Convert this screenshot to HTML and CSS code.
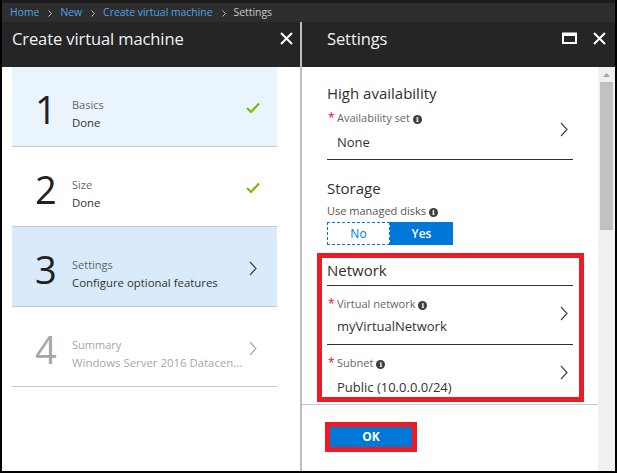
FILE: index.html
```html
<!DOCTYPE html>
<html>
<head>
<meta charset="utf-8">
<link rel="stylesheet" href="styles.css">
</head>
<body>
<div class="frame">
  <div class="topstrip"></div>
  <div class="crumbs">
    <a class="crumb">Home</a><svg class="sep" width="4" height="7" viewBox="0 0 4 7"><path d="M0.5 0.5L3.5 3.5L0.5 6.5" fill="none" stroke="#bdbdbd" stroke-width="1"/></svg>
    <a class="crumb">New</a><svg class="sep" width="4" height="7" viewBox="0 0 4 7"><path d="M0.5 0.5L3.5 3.5L0.5 6.5" fill="none" stroke="#bdbdbd" stroke-width="1"/></svg>
    <a class="crumb">Create virtual machine</a><svg class="sep" width="4" height="7" viewBox="0 0 4 7"><path d="M0.5 0.5L3.5 3.5L0.5 6.5" fill="none" stroke="#bdbdbd" stroke-width="1"/></svg>
    <span class="crumb-current">Settings</span>
  </div>
  <div class="panels">
    <section class="blade blade-left">
      <header class="blade-head">
        <h1 class="blade-title">Create virtual machine</h1>
        <div class="head-icons">
          <svg class="icon-x" width="13" height="13" viewBox="0 0 13 13"><path d="M1 1L12 12M12 1L1 12" stroke="#fff" stroke-width="2"/></svg>
        </div>
      </header>
      <div class="steps">
        <div class="step step-done">
          <div class="step-num">1</div>
          <div class="step-text"><div class="step-label">Basics</div><div class="step-sub">Done</div></div>
          <svg class="check" width="14" height="12" viewBox="0 0 14 12"><path d="M1 6L5 10L13 1.5" fill="none" stroke="#7fba00" stroke-width="2.2"/></svg>
        </div>
        <div class="step">
          <div class="step-num">2</div>
          <div class="step-text"><div class="step-label">Size</div><div class="step-sub">Done</div></div>
          <svg class="check" width="14" height="12" viewBox="0 0 14 12"><path d="M1 6L5 10L13 1.5" fill="none" stroke="#7fba00" stroke-width="2.2"/></svg>
        </div>
        <div class="step step-active">
          <div class="step-num">3</div>
          <div class="step-text"><div class="step-label">Settings</div><div class="step-sub">Configure optional features</div></div>
          <svg class="chev" width="8" height="15" viewBox="0 0 8 15"><path d="M1 1L7 7.5L1 14" fill="none" stroke="#444" stroke-width="1.2"/></svg>
        </div>
        <div class="step step-disabled">
          <div class="step-num">4</div>
          <div class="step-text"><div class="step-label">Summary</div><div class="step-sub">Windows Server 2016 Datacen...</div></div>
          <svg class="chev" width="8" height="15" viewBox="0 0 8 15"><path d="M1 1L7 7.5L1 14" fill="none" stroke="#aaa" stroke-width="1.2"/></svg>
        </div>
      </div>
    </section>
    <div class="divider"></div>
    <section class="blade blade-right">
      <header class="blade-head">
        <h1 class="blade-title title-right">Settings</h1>
        <div class="head-icons">
          <svg class="icon-max" width="15" height="12" viewBox="0 0 15 12"><rect x="1" y="1.5" width="13" height="9.5" fill="none" stroke="#fff" stroke-width="2"/><rect x="1" y="1" width="13" height="3" fill="#fff"/></svg>
          <svg class="icon-x" width="13" height="13" viewBox="0 0 13 13"><path d="M1 1L12 12M12 1L1 12" stroke="#fff" stroke-width="2"/></svg>
        </div>
      </header>
      <div class="blade-body">
        <div class="main">
          <div class="scroll">
            <h2 class="sec-title">High availability</h2>
            <div class="field">
              <div class="f-label"><span class="req">*</span>Availability set <span class="info">i</span></div>
              <div class="f-value">None</div>
              <svg class="chev f-chev" width="8" height="15" viewBox="0 0 8 15"><path d="M1 1L7 7.5L1 14" fill="none" stroke="#444" stroke-width="1.2"/></svg>
            </div>
            <h2 class="sec-title sec-storage">Storage</h2>
            <div class="plain-label">Use managed disks <span class="info">i</span></div>
            <div class="toggle">
              <span class="tg tg-no">No</span><span class="tg tg-yes">Yes</span>
            </div>
            <div class="highlight">
              <h2 class="sec-title net-title">Network</h2>
              <div class="field field-net">
                <div class="f-label"><span class="req">*</span>Virtual network <span class="info">i</span></div>
                <div class="f-value">myVirtualNetwork</div>
                <svg class="chev f-chev" width="8" height="15" viewBox="0 0 8 15"><path d="M1 1L7 7.5L1 14" fill="none" stroke="#444" stroke-width="1.2"/></svg>
              </div>
              <div class="field field-net field-last">
                <div class="f-label"><span class="req">*</span>Subnet <span class="info">i</span></div>
                <div class="f-value">Public (10.0.0.0/24)</div>
                <svg class="chev f-chev" width="8" height="15" viewBox="0 0 8 15"><path d="M1 1L7 7.5L1 14" fill="none" stroke="#444" stroke-width="1.2"/></svg>
              </div>
            </div>
          </div>
          <div class="footer">
            <div class="ok-mark"><button class="ok">OK</button></div>
          </div>
        </div>
        <div class="scrollbar">
          <svg class="sb-arrow" width="7" height="4" viewBox="0 0 7 4"><path d="M0 4L3.5 0L7 4Z" fill="#a6a6a6"/></svg>
          <div class="sb-thumb"></div>
        </div>
      </div>
    </section>
  </div>
</div>
</body>
</html>
```
FILE: styles.css
```css
* { box-sizing: border-box; }
html, body { margin: 0; padding: 0; }
body {
  font-family: "Open Sans", "Noto Sans", sans-serif;
  background: #fff;
}
.frame {
  width: 617px;
  height: 473px;
  border-left: 2px solid #000;
  border-right: 2px solid #000;
  border-bottom: 2px solid #000;
  background: #2e2e2e;
  display: flex;
  flex-direction: column;
  overflow: hidden;
}
.topstrip { height: 3px; background: #1c1c1c; flex: none; }
.crumbs {
  height: 19px;
  flex: none;
  padding-left: 8px;
  font-size: 10.4px;
  line-height: 19px;
  white-space: nowrap;
  display: flex;
  align-items: center;
}
.crumb { color: #4ba3ea; }
.crumb-current { color: #c8c8c8; }
.sep { margin: 1px 8px 0 9px; flex: none; }
.panels { flex: 1; display: flex; min-height: 0; }
.blade { display: flex; flex-direction: column; background: #fff; }
.blade-left { width: 298px; flex: none; }
.divider { width: 2px; background: #bdbdbd; flex: none; }
.blade-right { flex: 1; min-width: 0; }
.blade-head {
  height: 45px;
  flex: none;
  background: #252525;
  display: flex;
  align-items: center;
  justify-content: space-between;
  padding-bottom: 13px;
}
.blade-title {
  margin: 0;
  font-weight: 400;
  font-size: 16.5px;
  color: #f2f2f2;
  padding-left: 10px;
  letter-spacing: -0.1px;
}
.title-right { padding-left: 25px; }
.head-icons { display: flex; align-items: center; gap: 16px; padding-right: 9px; }
.blade-left .head-icons { padding-right: 7px; }
.steps { padding: 0 23px 0 10px; }
.step {
  height: 80px;
  border-bottom: 1px solid #c8c8c8;
  display: flex;
  align-items: center;
  padding: 6px 17px 0 23px;
}
.step-done { background: #eaf4fd; }
.step-active { background: #d9eafb; }
.step-num {
  width: 37px;
  font-size: 38px;
  line-height: 40px;
  font-weight: 400;
  color: #222;
  flex: none;
  margin-top: -2px;
}
.step-text { flex: 1; padding-top: 8px; }
.step-label { font-size: 11px; line-height: 18px; color: #666; }
.step-sub { font-size: 11.4px; line-height: 18px; color: #333; white-space: nowrap; }
.check { flex: none; margin-bottom: 4px; }
.chev { flex: none; }
.step .chev { margin-right: 3px; margin-bottom: 2px; }
.step-disabled .step-num, .step-disabled .step-label, .step-disabled .step-sub { color: #a6a6a6; }
.blade-body { flex: 1; display: flex; min-height: 0; }
.main { flex: 1; display: flex; flex-direction: column; min-width: 0; }
.scroll { height: 337px; flex: none; padding: 15px 25px 0 25px; overflow: hidden; }
.sec-title {
  margin: 0;
  font-weight: 400;
  font-size: 15px;
  line-height: 22px;
  color: #303030;
}
.field {
  position: relative;
  border-bottom: 1px solid #333;
  margin-top: 6px;
  padding-bottom: 8px;
}
.f-label { font-size: 11px; line-height: 16px; color: #666; padding-left: 1px; }
.req { color: #e81123; display: inline-block; width: 9px; font-size: 12px; }
.info {
  display: inline-block;
  width: 9px;
  height: 9px;
  border-radius: 50%;
  background: #3c3c3c;
  color: #fff;
  font-size: 7px;
  line-height: 9px;
  text-align: center;
  font-weight: 700;
  vertical-align: 0px;
  font-family: "DejaVu Serif", serif;
}
.f-value { font-size: 13px; line-height: 18px; color: #333; margin-top: 7px; padding-left: 10px; }
.f-chev { position: absolute; right: 5px; top: 12px; }
.sec-storage { margin-top: 17px; }
.plain-label { font-size: 11px; line-height: 16px; color: #555; margin-top: 4px; }
.toggle { display: flex; margin-top: 3px; width: 126px; height: 23px; }
.tg {
  flex: 1;
  text-align: center;
  font-size: 12px;
  line-height: 21px;
}
.tg-no {
  border: 1px dashed #0078d7;
  color: #0078d7;
  background: #fff;
  outline: 1px solid #fff;
}
.tg-yes { background: #0078d7; color: #fff; font-weight: 600; border: 1px solid #0078d7; }
.highlight {
  margin: 8px -11px 0 -10px;
  border: 5px solid #ed1c24;
  padding: 1px 6px 0 5px;
  height: 149px;
}
.net-title { padding-bottom: 4px; border-bottom: 1px solid #333; }
.field-net { margin-top: 10px; padding-bottom: 9px; }
.field-net .f-value { margin-top: 5px; }
.field-last { border-bottom: none; padding-bottom: 0; }
.field-last .f-value { margin-top: 7px; }
.field-net .f-chev { top: 10px; }
.footer { flex: 1; border-top: 1px solid #c8c8c8; padding: 17px 0 0 23px; }
.ok-mark { display: inline-block; border: 5px solid #ed1c24; }
.ok {
  display: block;
  width: 82px;
  height: 20px;
  background: #0078d7;
  color: #fff;
  border: none;
  font-family: "Open Sans", sans-serif;
  font-weight: 700;
  font-size: 12px;
  line-height: 20px;
  padding: 0;
}
.scrollbar {
  width: 17px;
  flex: none;
  background: #f0f0f0;
  display: flex;
  flex-direction: column;
  align-items: center;
  padding-top: 6px;
}
.sb-arrow { flex: none; }
.sb-thumb { width: 13px; height: 148px; background: #c1c1c1; margin-top: 5px; }
```
